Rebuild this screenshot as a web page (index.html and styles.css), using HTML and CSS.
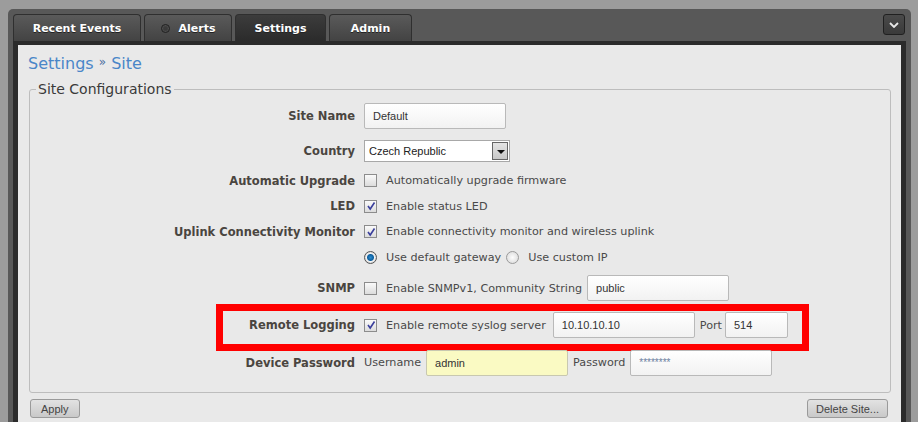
FILE: index.html
```
<!DOCTYPE html>
<html lang="en">
<head>
    <meta charset="UTF-8">
    <title>Settings - Site</title>
    <link rel="stylesheet" href="styles.css">
</head>
<body>

<div class="frame">
    <div class="topbar">
        <ul class="tabs">
            <li class="tab tab-events">Recent Events</li>
            <li class="tab tab-alerts"><span class="dot"></span>Alerts</li>
            <li class="tab tab-settings active">Settings</li>
            <li class="tab tab-admin">Admin</li>
        </ul>
        <button class="menu-btn">
            <svg width="10" height="6" viewBox="0 0 10 6"><path d="M1 1 L5 5 L9 1" fill="none" stroke="#e8e8e8" stroke-width="1.8"/></svg>
        </button>
    </div>

    <div class="content">
        <h1 class="crumbs">Settings <span class="sep">»</span> Site</h1>

        <fieldset class="config">
            <legend>Site Configurations</legend>

            <div class="row r-name">
                <label class="label">Site Name</label>
                <input class="text" type="text" value="Default">
            </div>

            <div class="row r-country">
                <label class="label">Country</label>
                <div class="select"><span>Czech Republic</span><span class="arrow"></span></div>
            </div>

            <div class="row r-short">
                <label class="label">Automatic Upgrade</label>
                <span class="check"></span>
                <span class="opt">Automatically upgrade firmware</span>
            </div>

            <div class="row">
                <label class="label">LED</label>
                <span class="check on"><svg viewBox="0 0 10 10"><path d="M2 5 L4.2 8 L8.5 1.5" fill="none" stroke="#3a3f9c" stroke-width="1.6"/></svg></span>
                <span class="opt">Enable status LED</span>
            </div>

            <div class="row r-short">
                <label class="label">Uplink Connectivity Monitor</label>
                <span class="check on"><svg viewBox="0 0 10 10"><path d="M2 5 L4.2 8 L8.5 1.5" fill="none" stroke="#3a3f9c" stroke-width="1.6"/></svg></span>
                <span class="opt">Enable connectivity monitor and wireless uplink</span>
            </div>

            <div class="row">
                <label class="label"></label>
                <span class="radio on"></span>
                <span class="opt">Use default gateway</span>
                <span class="radio second"></span>
                <span class="opt">Use custom IP</span>
            </div>

            <div class="row r-snmp">
                <label class="label">SNMP</label>
                <span class="check"></span>
                <span class="opt">Enable SNMPv1, Community String</span>
                <input class="text gap-snmp" type="text" value="public">
            </div>

            <div class="row r-remote">
                <label class="label">Remote Logging</label>
                <span class="check on"><svg viewBox="0 0 10 10"><path d="M2 5 L4.2 8 L8.5 1.5" fill="none" stroke="#3a3f9c" stroke-width="1.6"/></svg></span>
                <span class="opt">Enable remote syslog server</span>
                <input class="text gap-syslog" type="text" value="10.10.10.10">
                <span class="opt port">Port</span>
                <input class="text short" type="text" value="514">
                <div class="highlight"></div>
            </div>

            <div class="row r-pass">
                <label class="label">Device Password</label>
                <span class="opt plain">Username</span>
                <input class="text yellow" type="text" value="admin">
                <span class="opt plain pass-label">Password</span>
                <input class="text stars" type="text" value="********">
            </div>
        </fieldset>

        <div class="actions">
            <button class="btn">Apply</button>
            <button class="btn btn-delete">Delete Site...</button>
        </div>
    </div>
</div>

</body>
</html>
```

FILE: styles.css
```
* { box-sizing: border-box; }
body { margin: 0; padding: 9px 7px 0 8px; background: #9c9c9c; font-family: "DejaVu Sans", Verdana, sans-serif; color: #444; height: 422px; overflow: hidden; }

.frame { background: #585858; border-radius: 5px 5px 0 0; padding: 5px 5px 0 5px; height: 420px; }
.topbar { display: flex; justify-content: space-between; height: 27px; }
.tabs { display: flex; gap: 3px; list-style: none; margin: 0; padding: 0; }
.tab { height: 27px; display: flex; align-items: center; justify-content: center; color: #fff; font-weight: bold; font-size: 11px; text-shadow: 0 1px 0 #222; background: linear-gradient(#5a5a5a, #434343); border: 1px solid #2f2f2f; border-bottom: none; border-radius: 4px 4px 0 0; }
.tab.active { background: linear-gradient(#3c3c3c, #2b2b2b); }
.tab-events { width: 128px; }
.tab-alerts { width: 88px; }
.tab-settings { width: 91px; }
.tab-admin { width: 83px; }
.dot { width: 9px; height: 9px; border-radius: 50%; background: #3a3a3a; border: 1px solid #222; box-shadow: inset 0 0 2px #777; margin-right: 9px; }

.menu-btn { width: 22px; height: 21px; margin-right: 1px; padding: 0; background: linear-gradient(#4a4a4a, #3a3a3a); border: 1px solid #202020; border-radius: 3px; display: flex; align-items: center; justify-content: center; }

.content { background: #e9e9e9; border: 5px solid #2b2b2b; border-top-width: 4px; border-bottom: none; height: 388px; padding: 7px 10px 0 10px; }
.crumbs { margin: 0; font-weight: normal; font-size: 16px; line-height: 20px; color: #4a86c8; }
.crumbs .sep { font-size: 12px; vertical-align: 3px; color: #4a6fa0; }

.config { margin: 7px 0 0 1px; padding: 0 0 11px 0; border: 1px solid #bdbdbd; border-radius: 3px; }
.config legend { margin-left: 6px; padding: 0 2px; font-size: 14px; line-height: 16px; color: #3a3a3a; }

.row { position: relative; display: flex; align-items: center; height: 26px; font-size: 11.2px; }
.row.r-name { height: 37px; }
.row.r-country { height: 34px; }
.row.r-short { height: 25px; }
.row.r-snmp { height: 36px; }
.row.r-remote { height: 38px; }
.row.r-pass { height: 37px; }
.label { width: 325px; margin-right: 9px; text-align: right; font-weight: bold; font-size: 11.5px; color: #4a4540; }
.opt { color: #4a4a4a; }
.opt.port { margin: 0 3px 0 5px; }
.plain { margin-right: 5px; }
.pass-label { margin-left: 5px; }

.check { width: 13px; height: 13px; border: 1px solid #8c8c8c; background: linear-gradient(#fafafa, #dcdcdc); margin-right: 9px; display: flex; align-items: center; justify-content: center; }
.check svg { width: 10px; height: 10px; }
.radio { width: 13px; height: 13px; border-radius: 50%; border: 1px solid #9a9a9a; background: radial-gradient(#fdfdfd, #d6d6d6); margin-right: 9px; }
.radio.on { border-color: #555; background: radial-gradient(circle, #2a8cd0 0, #0e5f9e 3px, #f4f4f4 4px, #cfcfcf 6px); }
.radio.second { margin-left: 5px; }

.text { width: 142px; height: 26px; border: 1px solid #b9b9b9; border-radius: 2px; background: linear-gradient(#ffffff, #f2f2f2); font-family: "Liberation Sans", Arial, sans-serif; font-size: 11px; color: #333; padding: 0 8px; }
.text.short { width: 63px; }
.text.yellow { background: #fafac3; border-color: #c8c8b0; }
.text.stars { color: #6b7fa0; font-size: 10px; }
.gap-snmp { margin-left: 5px; }
.gap-syslog { margin-left: 7px; }

.select { width: 146px; height: 22px; border: 1px solid #a8a8a8; background: #fff; display: flex; align-items: center; justify-content: space-between; padding: 0 1px 0 4px; font-family: "Liberation Sans", Arial, sans-serif; font-size: 11px; color: #222; }
.arrow { width: 16px; height: 18px; background: linear-gradient(#e4e4e4, #c8c8c8); border: 1px solid #666; position: relative; }
.arrow::after { content: ""; position: absolute; left: 4px; top: 7px; border: 4px solid transparent; border-top: 4px solid #111; border-bottom: none; }

.highlight { position: absolute; left: 186px; top: -2px; width: 593px; height: 47px; border: 7px solid #ff0000; pointer-events: none; }

.actions { display: flex; justify-content: space-between; padding: 6px 3px 0 2px; }
.btn { height: 19px; padding: 0 10px; border: 1px solid #9a9a9a; border-radius: 3px; background: linear-gradient(#e2e2e2, #c9c9c9); font-family: "Liberation Sans", Arial, sans-serif; font-size: 11px; color: #444; }
.btn-delete { padding: 0 8px; }
```
